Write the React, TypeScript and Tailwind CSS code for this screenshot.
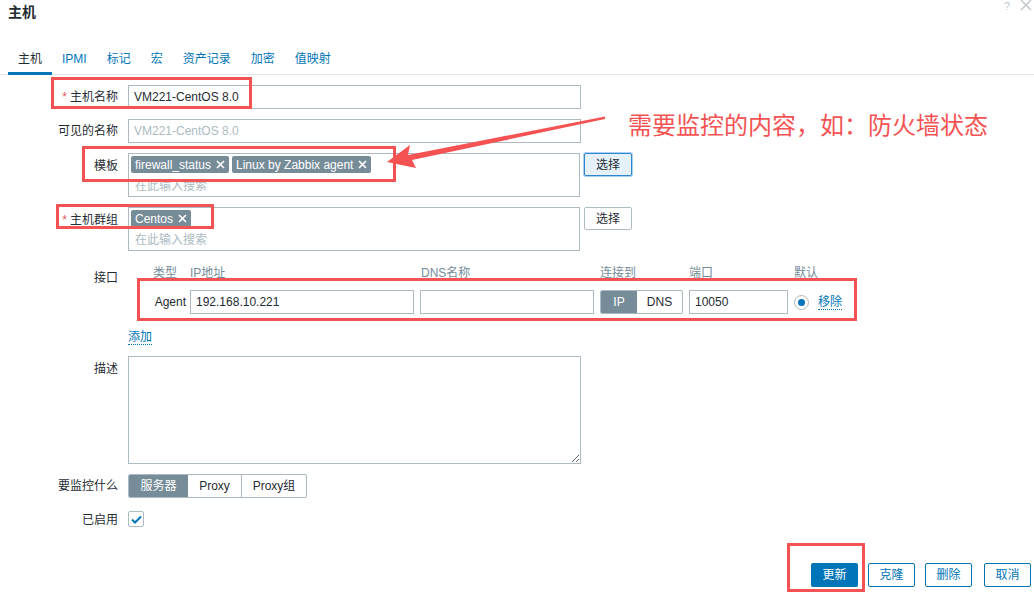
import { ReactNode } from "react";

const font = { fontFamily: '"Liberation Sans", Arial, "Noto Sans CJK SC", sans-serif' };

function Label({ children, required, top }: { children: ReactNode; required?: boolean; top?: boolean }) {
  return (
    <div
      className={`w-[118px] shrink-0 text-right text-[12px] text-[#1f2c33] ${
        top ? "pt-[4px]" : "self-center"
      }`}
    >
      {required && <span className="mr-[3px] text-[#e45959]">*</span>}
      {children}
    </div>
  );
}

function Tag({ text }: { text: string }) {
  return (
    <span className="flex h-[17px] items-center gap-[5px] rounded-[2px] bg-[#768d99] px-[4px] text-[12px] text-white">
      {text}
      <svg width="9" height="9" viewBox="0 0 9 9">
        <path d="M1 1 L8 8 M8 1 L1 8" stroke="white" strokeWidth="1.7" />
      </svg>
    </span>
  );
}

function MultiSelect({ tags }: { tags: string[] }) {
  return (
    <div className="flex h-[44px] w-[452px] flex-col border border-[#acbbc2] bg-white px-[2px] pt-[2px]">
      <div className="flex gap-[3px]">
        {tags.map((t) => (
          <Tag key={t} text={t} />
        ))}
      </div>
      <div className="mt-[4px] pl-[4px] text-[12px] text-[#acbbc2]">在此输入搜索</div>
    </div>
  );
}

export default function App() {
  const tabs = ["主机", "IPMI", "标记", "宏", "资产记录", "加密", "值映射"];

  return (
    <div
      style={font}
      className="relative flex h-[597px] w-[1034px] flex-col overflow-hidden bg-white text-[12px] text-[#1f2c33]"
    >
      {/* title */}
      <div className="flex items-start justify-between pl-[8px] pr-[2px]">
        <div className="pt-[3px] text-[14px] font-bold leading-[18px]">主机</div>
        <div className="mt-[0px] flex items-center gap-[10px] text-[#c2cbd0]">
          <span className="text-[11px] leading-[13px]">?</span>
          <svg width="12" height="12" viewBox="0 0 12 12" className="mt-[-3px]">
            <path d="M1 1 L11 11 M11 1 L1 11" stroke="#c2cbd0" strokeWidth="1.6" />
          </svg>
        </div>
      </div>

      {/* tabs */}
      <div className="mt-[30px] flex border-b border-[#dfe4e7] pl-[8px]">
        {tabs.map((t, i) => (
          <div
            key={t}
            className={`-mb-px px-[10px] pb-[6px] pt-[1px] text-[12px] leading-[14px] ${
              i === 0 ? "border-b-[3px] border-[#0275b8] text-[#1f2c33]" : "border-b-[3px] border-transparent text-[#0275b8]"
            }`}
          >
            {t}
          </div>
        ))}
      </div>

      <div className="mt-[10px] flex flex-col">
        {/* host name */}
        <div className="flex gap-[10px]">
          <Label required>主机名称</Label>
          <div className="flex h-[24px] w-[453px] items-center border border-[#acbbc2] px-[5px] text-[12px]">
            VM221-CentOS 8.0
          </div>
        </div>

        {/* visible name */}
        <div className="mt-[10px] flex gap-[10px]">
          <Label>可见的名称</Label>
          <div className="flex h-[24px] w-[453px] items-center border border-[#acbbc2] px-[5px] text-[12px] text-[#acbbc2]">
            VM221-CentOS 8.0
          </div>
        </div>

        {/* templates */}
        <div className="mt-[10px] flex gap-[10px]">
          <Label top>模板</Label>
          <MultiSelect tags={["firewall_status", "Linux by Zabbix agent"]} />
          <button className="ml-[-6px] h-[23px] w-[48px] rounded-[2px] border border-[#2f86cf] bg-[#e5f1fb] text-[12px] text-[#1f2c33] shadow-[0_0_0_1px_#a9d1f5]">
            选择
          </button>
        </div>

        {/* groups */}
        <div className="mt-[10px] flex gap-[10px]">
          <Label top required>
            主机群组
          </Label>
          <MultiSelect tags={["Centos"]} />
          <button className="ml-[-6px] h-[23px] w-[48px] rounded-[2px] border border-[#acbbc2] bg-white text-[12px] text-[#1f2c33]">
            选择
          </button>
        </div>

        {/* interfaces */}
        <div className="mt-[14px] flex gap-[10px]">
          <Label top>接口</Label>
          <div className="flex flex-col">
            <div className="flex pt-[1px] text-[12px] leading-[14px] text-[#768d99]">
              <span className="w-[62px] pl-[25px]">类型</span>
              <span className="w-[231px]">IP地址</span>
              <span className="w-[179px]">DNS名称</span>
              <span className="w-[89px]">连接到</span>
              <span className="w-[105px]">端口</span>
              <span>默认</span>
            </div>
            <div className="mt-[10px] flex items-center">
              <span className="w-[58px] text-right">Agent</span>
              <div className="ml-[4px] flex h-[24px] w-[224px] items-center border border-[#acbbc2] px-[5px]">
                192.168.10.221
              </div>
              <div className="ml-[6px] h-[24px] w-[174px] border border-[#acbbc2]" />
              <div className="ml-[6px] flex h-[24px] w-[83px] overflow-hidden rounded-[2px] border border-[#acbbc2]">
                <span className="flex w-[36px] items-center justify-center bg-[#768d99] text-white">IP</span>
                <span className="flex flex-1 items-center justify-center">DNS</span>
              </div>
              <div className="ml-[6px] flex h-[24px] w-[99px] items-center border border-[#acbbc2] px-[5px]">
                10050
              </div>
              <span className="ml-[6px] flex h-[15px] w-[15px] items-center justify-center rounded-full border border-[#acbbc2]">
                <span className="h-[7px] w-[7px] rounded-full bg-[#0275b8]" />
              </span>
              <span className="ml-[9px] border-b border-dotted border-[#0275b8] leading-[14px] text-[#0275b8]">移除</span>
            </div>
            <div className="mt-[14px]">
              <span className="border-b border-dotted border-[#0275b8] leading-[14px] text-[#0275b8]">添加</span>
            </div>
          </div>
        </div>

        {/* description */}
        <div className="mt-[10px] flex gap-[10px]">
          <Label top>描述</Label>
          <textarea className="h-[108px] w-[453px] border border-[#acbbc2] bg-white outline-none" />
        </div>

        {/* monitored by */}
        <div className="mt-[10px] flex gap-[10px]">
          <Label>要监控什么</Label>
          <div className="flex h-[24px] overflow-hidden rounded-[2px] border border-[#acbbc2]">
            <span className="flex w-[59px] items-center justify-center bg-[#768d99] text-white">服务器</span>
            <span className="flex w-[54px] items-center justify-center border-r border-[#acbbc2]">Proxy</span>
            <span className="flex w-[64px] items-center justify-center">Proxy组</span>
          </div>
        </div>

        {/* enabled */}
        <div className="mt-[13px] flex gap-[10px]">
          <Label>已启用</Label>
          <span className="flex h-[16px] w-[16px] items-center justify-center rounded-[2px] border border-[#acbbc2]">
            <svg width="11" height="9" viewBox="0 0 11 9">
              <path d="M1 4.5 L4 7.5 L10 1.5" fill="none" stroke="#0275b8" strokeWidth="2" />
            </svg>
          </span>
        </div>
      </div>

      {/* footer */}
      <div className="mt-auto flex justify-end gap-[10px] pb-[10px] pr-[3px]">
        <button className="h-[24px] w-[47px] rounded-[2px] bg-[#0275b8] text-[12px] text-white">更新</button>
        <button className="h-[24px] w-[47px] rounded-[2px] border border-[#0275b8] bg-white text-[12px] text-[#0275b8]">
          克隆
        </button>
        <button className="h-[24px] w-[47px] rounded-[2px] border border-[#0275b8] bg-white text-[12px] text-[#0275b8]">
          删除
        </button>
        <button className="ml-[2px] h-[24px] w-[47px] rounded-[2px] border border-[#0275b8] bg-white text-[12px] text-[#0275b8]">
          取消
        </button>
      </div>

      {/* annotation overlays */}
      <div className="pointer-events-none absolute left-[51px] top-[77px] h-[32px] w-[201px] border-[3px] border-[#f55353]" />
      <div className="pointer-events-none absolute left-[82px] top-[146px] h-[36px] w-[314px] border-[3px] border-[#f55353]" />
      <div className="pointer-events-none absolute left-[56px] top-[204px] h-[25px] w-[158px] border-[3px] border-[#f55353]" />
      <div className="pointer-events-none absolute left-[137px] top-[278px] h-[43px] w-[720px] border-[3px] border-[#f55353]" />
      <div className="pointer-events-none absolute left-[787px] top-[543px] h-[49px] w-[78px] border-[3px] border-[#f55353]" />

      <div
        className="pointer-events-none absolute left-[628px] top-[108px] whitespace-nowrap text-[24px] leading-[32px] text-[#f55353]"
        style={{ fontFamily: '"Noto Sans CJK SC", sans-serif' }}
      >
        需要监控的内容，如：防火墙状态
      </div>
      <svg className="pointer-events-none absolute left-0 top-0" width="1034" height="597">
        <polygon
          points="387,162 410,145 408,155 605,116.5 605,119 412,160 416,168"
          fill="#f55353"
        />
      </svg>
    </div>
  );
}
